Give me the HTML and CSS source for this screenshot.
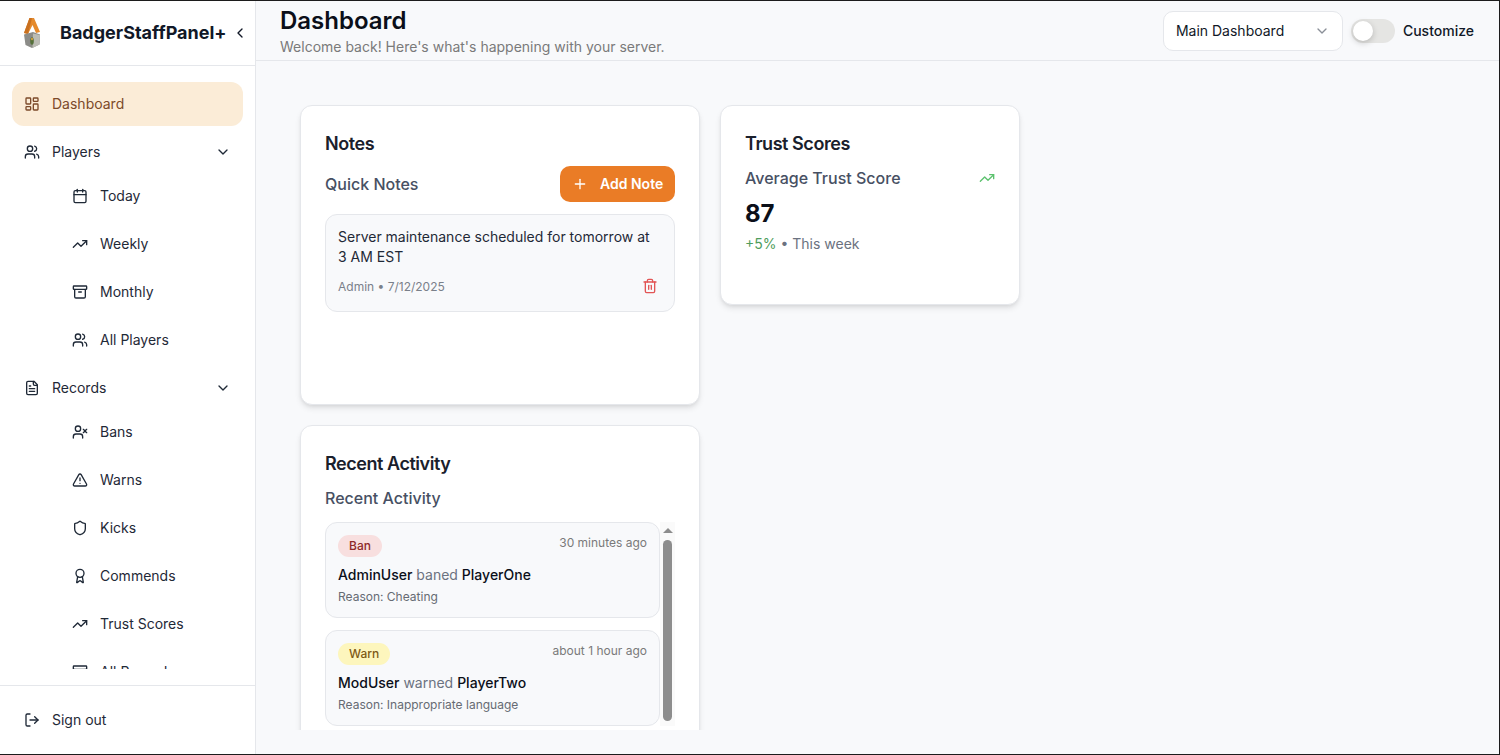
FILE: index.html
```html
<!DOCTYPE html>
<html lang="en">
<head>
    <meta charset="UTF-8">
    <meta name="viewport" content="width=device-width, initial-scale=1.0">
    <title>BadgerStaffPanel+ Dashboard</title>
    <link rel="stylesheet" href="styles.css">
</head>
<body>
    <svg class="sprites" width="0" height="0" aria-hidden="true">
        <symbol id="i-dashboard" viewBox="0 0 24 24"><rect x="3" y="3" width="7" height="9" rx="1"/><rect x="14" y="3" width="7" height="5" rx="1"/><rect x="14" y="12" width="7" height="9" rx="1"/><rect x="3" y="16" width="7" height="5" rx="1"/></symbol>
        <symbol id="i-users" viewBox="0 0 24 24"><path d="M16 21v-2a4 4 0 0 0-4-4H6a4 4 0 0 0-4 4v2"/><circle cx="9" cy="7" r="4"/><path d="M22 21v-2a4 4 0 0 0-3-3.87"/><path d="M16 3.13a4 4 0 0 1 0 7.75"/></symbol>
        <symbol id="i-calendar" viewBox="0 0 24 24"><path d="M8 2v4"/><path d="M16 2v4"/><rect x="3" y="4" width="18" height="18" rx="2"/><path d="M3 10h18"/></symbol>
        <symbol id="i-trend" viewBox="0 0 24 24"><path d="M22 7 13.5 15.5 8.5 10.5 2 17"/><path d="M16 7h6v6"/></symbol>
        <symbol id="i-archive" viewBox="0 0 24 24"><rect x="2" y="3" width="20" height="5" rx="1"/><path d="M4 8v11a2 2 0 0 0 2 2h12a2 2 0 0 0 2-2V8"/><path d="M10 12h4"/></symbol>
        <symbol id="i-file" viewBox="0 0 24 24"><path d="M15 2H6a2 2 0 0 0-2 2v16a2 2 0 0 0 2 2h12a2 2 0 0 0 2-2V7Z"/><path d="M14 2v4a2 2 0 0 0 2 2h4"/><path d="M10 9H8"/><path d="M16 13H8"/><path d="M16 17H8"/></symbol>
        <symbol id="i-userx" viewBox="0 0 24 24"><path d="M16 21v-2a4 4 0 0 0-4-4H6a4 4 0 0 0-4 4v2"/><circle cx="9" cy="7" r="4"/><path d="m17 8 5 5"/><path d="m22 8-5 5"/></symbol>
        <symbol id="i-alert" viewBox="0 0 24 24"><path d="m21.73 18-8-14a2 2 0 0 0-3.48 0l-8 14A2 2 0 0 0 4 21h16a2 2 0 0 0 1.73-3"/><path d="M12 9v4"/><path d="M12 17h.01"/></symbol>
        <symbol id="i-shield" viewBox="0 0 24 24"><path d="M20 13c0 5-3.5 7.5-7.66 8.95a1 1 0 0 1-.67-.01C7.5 20.5 4 18 4 13V6a1 1 0 0 1 1-1c2 0 4.5-1.2 6.24-2.72a1.17 1.17 0 0 1 1.52 0C14.51 3.81 17 5 19 5a1 1 0 0 1 1 1z"/></symbol>
        <symbol id="i-award" viewBox="0 0 24 24"><path d="m15.48 12.89 1.51 8.53a.5.5 0 0 1-.81.47l-3.58-2.69a1 1 0 0 0-1.2 0l-3.59 2.69a.5.5 0 0 1-.81-.47l1.51-8.53"/><circle cx="12" cy="8" r="6"/></symbol>
        <symbol id="i-logout" viewBox="0 0 24 24"><path d="M9 21H5a2 2 0 0 1-2-2V5a2 2 0 0 1 2-2h4"/><path d="m16 17 5-5-5-5"/><path d="M21 12H9"/></symbol>
        <symbol id="i-down" viewBox="0 0 24 24"><path d="m6 9 6 6 6-6"/></symbol>
        <symbol id="i-left" viewBox="0 0 24 24"><path d="m15 18-6-6 6-6"/></symbol>
        <symbol id="i-plus" viewBox="0 0 24 24"><path d="M5 12h14"/><path d="M12 5v14"/></symbol>
        <symbol id="i-trash" viewBox="0 0 24 24"><path d="M3 6h18"/><path d="M19 6v14a2 2 0 0 1-2 2H7a2 2 0 0 1-2-2V6"/><path d="M8 6V4a2 2 0 0 1 2-2h4a2 2 0 0 1 2 2v2"/><path d="M10 11v6"/><path d="M14 11v6"/></symbol>
    </svg>

    <aside class="sidebar">
        <div class="brand">
            <svg class="logo" viewBox="0 0 20 31" aria-hidden="true">
                <path d="M2 16 7.500 1h4.500L18 15l-4 1-3.500-8L6 17z" fill="#e58a2c"/>
                <path d="M7.500 1h2.500L6 17l-4-1z" fill="#c9701f"/>
                <path d="M2 17.500 11 15l7 2.500-.500 10L10 31l-6.500-3z" fill="#8c8c88"/>
                <path d="M11 16.500l7 1.500-.500 9.500L10.500 31z" fill="#bcbcb4"/>
                <ellipse cx="10" cy="24" rx="1.800" ry="3.800" fill="#55703a"/>
                <ellipse cx="10" cy="22" rx="1" ry="1.300" fill="#d9a03a"/>
            </svg>
            <span class="brand-name">BadgerStaffPanel+</span>
            <svg class="icon brand-toggle"><use href="#i-left"/></svg>
        </div>

        <nav class="nav">
            <a class="nav-item active"><svg class="icon"><use href="#i-dashboard"/></svg>Dashboard</a>
            <a class="nav-item"><svg class="icon"><use href="#i-users"/></svg>Players<svg class="icon chevron"><use href="#i-down"/></svg></a>
            <div class="subnav">
                <a class="nav-item"><svg class="icon"><use href="#i-calendar"/></svg>Today</a>
                <a class="nav-item"><svg class="icon"><use href="#i-trend"/></svg>Weekly</a>
                <a class="nav-item"><svg class="icon"><use href="#i-archive"/></svg>Monthly</a>
                <a class="nav-item"><svg class="icon"><use href="#i-users"/></svg>All Players</a>
            </div>
            <a class="nav-item"><svg class="icon"><use href="#i-file"/></svg>Records<svg class="icon chevron"><use href="#i-down"/></svg></a>
            <div class="subnav">
                <a class="nav-item"><svg class="icon"><use href="#i-userx"/></svg>Bans</a>
                <a class="nav-item"><svg class="icon"><use href="#i-alert"/></svg>Warns</a>
                <a class="nav-item"><svg class="icon"><use href="#i-shield"/></svg>Kicks</a>
                <a class="nav-item"><svg class="icon"><use href="#i-award"/></svg>Commends</a>
                <a class="nav-item"><svg class="icon"><use href="#i-trend"/></svg>Trust Scores</a>
                <a class="nav-item"><svg class="icon"><use href="#i-archive"/></svg>All Records</a>
            </div>
        </nav>

        <div class="sidebar-footer">
            <a class="nav-item"><svg class="icon"><use href="#i-logout"/></svg>Sign out</a>
        </div>
    </aside>

    <div class="page">
        <header class="topbar">
            <div>
                <h1>Dashboard</h1>
                <p class="subtitle">Welcome back! Here's what's happening with your server.</p>
            </div>
            <div class="topbar-actions">
                <div class="select">Main Dashboard<svg class="icon select-arrow"><use href="#i-down"/></svg></div>
                <div class="switch"><span class="knob"></span></div>
                <span class="switch-label">Customize</span>
            </div>
        </header>

        <main class="content">
            <section class="card notes-card">
                <h3>Notes</h3>
                <div class="notes-head">
                    <span class="card-sub">Quick Notes</span>
                    <button class="btn" type="button"><svg class="icon"><use href="#i-plus"/></svg>Add Note</button>
                </div>
                <div class="note">
                    <p>Server maintenance scheduled for tomorrow at 3 AM EST</p>
                    <div class="note-meta">
                        <span>Admin • 7/12/2025</span>
                        <svg class="icon trash"><use href="#i-trash"/></svg>
                    </div>
                </div>
            </section>

            <section class="card trust-card">
                <h3>Trust Scores</h3>
                <div class="trust-head">
                    <span class="card-sub">Average Trust Score</span>
                    <svg class="icon trend-up"><use href="#i-trend"/></svg>
                </div>
                <div class="score">87</div>
                <div class="score-note"><span class="plus">+5%</span> • This week</div>
            </section>

            <section class="card activity-card">
                <h3>Recent Activity</h3>
                <div class="card-sub activity-sub">Recent Activity</div>
                <div class="activity-wrap">
                    <div class="activity-list">
                        <div class="activity">
                            <div class="activity-top">
                                <span class="badge badge-ban">Ban</span>
                                <span class="time">30 minutes ago</span>
                            </div>
                            <div class="activity-text"><b>AdminUser</b> baned <b>PlayerOne</b></div>
                            <div class="reason">Reason: Cheating</div>
                        </div>
                        <div class="activity">
                            <div class="activity-top">
                                <span class="badge badge-warn">Warn</span>
                                <span class="time">about 1 hour ago</span>
                            </div>
                            <div class="activity-text"><b>ModUser</b> warned <b>PlayerTwo</b></div>
                            <div class="reason">Reason: Inappropriate language</div>
                        </div>
                    </div>
                    <div class="scrollbar">
                        <span class="scroll-arrow"></span>
                        <span class="scroll-thumb"></span>
                    </div>
                </div>
            </section>
        </main>
    </div>
</body>
</html>
```

FILE: styles.css
```css
* {
    box-sizing: border-box;
}
html, body {
    height: 755px;
}
body {
    margin: 0;
    display: flex;
    overflow: hidden;
    font-family: Inter, "Liberation Sans", sans-serif;
    font-size: 14px;
    color: #111827;
    background-color: #f8f9fb;
    border-top: 1px solid #1c1c1c;
    border-right: 1px solid #1c1c1c;
    border-bottom: 1px solid #1c1c1c;
}
h1, h3, p {
    margin: 0;
}
.sprites {
    position: absolute;
}
.icon {
    width: 16px;
    height: 16px;
    flex: none;
    fill: none;
    stroke: currentColor;
    stroke-width: 2;
    stroke-linecap: round;
    stroke-linejoin: round;
}

/* sidebar */
.sidebar {
    width: 256px;
    flex: none;
    display: flex;
    flex-direction: column;
    background-color: #ffffff;
    border-right: 1px solid #e5e7eb;
}
.brand {
    height: 65px;
    flex: none;
    display: flex;
    align-items: center;
    padding: 0 0 1px 22px;
    border-bottom: 1px solid #e5e7eb;
}
.logo {
    width: 20px;
    height: 31px;
    flex: none;
}
.brand-name {
    margin-left: 18px;
    font-size: 18px;
    font-weight: 700;
    color: #111827;
}
.brand-toggle {
    margin-left: 5px;
}
.nav {
    flex: 1;
    min-height: 0;
    margin: 16px 0;
    padding: 0 12px;
    overflow: hidden;
    display: flex;
    flex-direction: column;
    gap: 4px;
}
.nav-item {
    height: 44px;
    flex: none;
    display: flex;
    align-items: center;
    gap: 12px;
    padding: 0 12px 1px;
    border-radius: 12px;
    color: #1f2937;
}
.nav-item.active {
    background-color: #fbecd7;
    color: #7c4a2a;
}
.chevron {
    margin-left: auto;
}
.subnav {
    display: flex;
    flex-direction: column;
    gap: 4px;
    margin-top: -4px;
    padding-left: 48px;
}
.sidebar-footer {
    height: 69px;
    flex: none;
    display: flex;
    align-items: center;
    padding: 0 12px;
    border-top: 1px solid #e5e7eb;
}
.sidebar-footer .nav-item {
    flex: 1;
}

/* top bar */
.page {
    flex: 1;
    min-width: 0;
    display: flex;
    flex-direction: column;
}
.topbar {
    height: 60px;
    flex: none;
    display: flex;
    align-items: center;
    justify-content: space-between;
    padding: 0 25px 0 24px;
    border-bottom: 1px solid #e5e7eb;
}
h1 {
    font-size: 24px;
    font-weight: 600;
    line-height: 32px;
    color: #0b0f19;
}
.subtitle {
    line-height: 20px;
    color: #7a7a7a;
}
.topbar-actions {
    display: flex;
    align-items: center;
    gap: 8px;
}
.select {
    width: 180px;
    height: 40px;
    display: flex;
    align-items: center;
    justify-content: space-between;
    padding: 0 12px;
    background-color: #ffffff;
    border: 1px solid #e5e7eb;
    border-radius: 10px;
}
.select-arrow {
    color: #8a8f98;
}
.switch {
    width: 44px;
    height: 24px;
    padding: 2px;
    border-radius: 12px;
    background-color: #e5e5e3;
}
.knob {
    display: block;
    width: 20px;
    height: 20px;
    border-radius: 50%;
    background-color: #ffffff;
    box-shadow: 0 2px 6px rgba(0,0,0,0.2);
}
.switch-label {
    font-weight: 500;
}

/* cards */
.content {
    height: 669px;
    flex: none;
    overflow: hidden;
    padding: 44px;
    display: grid;
    grid-template-columns: 400px 300px;
    grid-template-rows: 300px auto;
    gap: 20px;
    align-items: start;
}
.card {
    padding: 24px;
    background-color: #ffffff;
    border: 1px solid #e5e7eb;
    border-radius: 12px;
    box-shadow: 0 4px 6px -1px rgba(0,0,0,0.1), 0 2px 4px -2px rgba(0,0,0,0.1);
}
.card h3 {
    font-size: 18px;
    font-weight: 600;
    line-height: 28px;
    letter-spacing: -0.45px;
    color: #1a202c;
}
.card-sub {
    font-size: 16px;
    font-weight: 500;
    color: #475063;
}
.notes-card {
    height: 300px;
}
.notes-head {
    display: flex;
    align-items: center;
    justify-content: space-between;
    margin-top: 8px;
}
.btn {
    width: 115px;
    height: 36px;
    display: flex;
    align-items: center;
    gap: 12px;
    padding: 0 12px 1px;
    border: none;
    border-radius: 10px;
    background-color: #ea7c26;
    color: #ffffff;
    font-family: inherit;
    font-size: 14px;
    font-weight: 600;
    white-space: nowrap;
}
.note {
    height: 98px;
    margin-top: 12px;
    padding: 12px;
    background-color: #f8f9fb;
    border: 1px solid #e5e7eb;
    border-radius: 12px;
}
.note p {
    line-height: 20px;
    color: #1f2937;
}
.note-meta {
    display: flex;
    align-items: center;
    justify-content: space-between;
    margin-top: 11px;
    padding-right: 4px;
    font-size: 12px;
    color: #7a808a;
}
.trash {
    color: #e25555;
}
.trust-card {
    height: 200px;
}
.trust-head {
    display: flex;
    align-items: center;
    justify-content: space-between;
    margin-top: 10px;
}
.trend-up {
    color: #5cc26e;
}
.score {
    margin-top: 10px;
    font-size: 24px;
    font-weight: 700;
    line-height: 32px;
    color: #0b0f19;
}
.score-note {
    margin-top: 5px;
    color: #6b7280;
}
.plus {
    color: #4f9d5d;
}

/* activity */
.activity-card {
    grid-column: 1;
}
.activity-sub {
    margin-top: 10px;
}
.activity-wrap {
    display: flex;
    margin-top: 14px;
}
.activity-list {
    flex: 1;
    display: flex;
    flex-direction: column;
    gap: 12px;
}
.activity {
    height: 96px;
    padding: 12px;
    background-color: #f8f9fb;
    border: 1px solid #e5e7eb;
    border-radius: 12px;
}
.activity-top {
    display: flex;
    align-items: flex-start;
    justify-content: space-between;
    height: 22px;
}
.badge {
    height: 22px;
    padding: 0 11px;
    border-radius: 11px;
    font-size: 12px;
    font-weight: 500;
    line-height: 22px;
}
.badge-ban {
    background-color: #f8dfdf;
    color: #8f2a2a;
}
.badge-warn {
    background-color: #fdf6bd;
    color: #7d5a14;
}
.time {
    font-size: 12px;
    line-height: 16px;
    color: #7a7a7a;
}
.activity-text {
    margin-top: 8px;
    line-height: 20px;
    color: #6b7280;
}
.activity-text b {
    font-weight: 500;
    color: #0b0f19;
}
.reason {
    margin-top: 4px;
    font-size: 12px;
    line-height: 16px;
    color: #666b73;
}
.scrollbar {
    width: 15px;
    flex: none;
    display: flex;
    flex-direction: column;
    align-items: center;
    padding-top: 6px;
    background-color: #fafafa;
}
.scroll-arrow {
    width: 0;
    height: 0;
    border-left: 5px solid transparent;
    border-right: 5px solid transparent;
    border-bottom: 5px solid #8d8d8d;
}
.scroll-thumb {
    width: 9px;
    height: 181px;
    margin-top: 7px;
    border-radius: 5px;
    background-color: #8d8d8d;
}
```
